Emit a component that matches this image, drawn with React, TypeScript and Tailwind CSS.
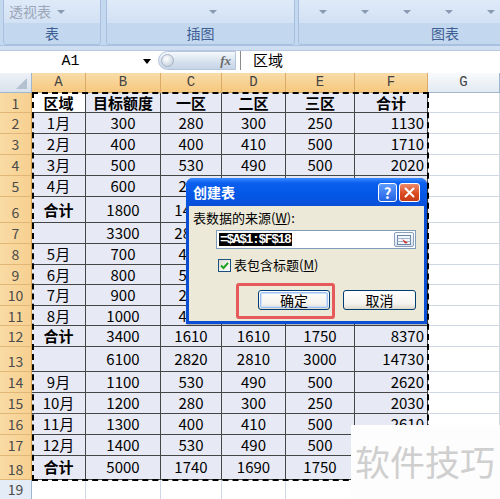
import React from 'react'

const COLS = ['A', 'B', 'C', 'D', 'E', 'F', 'G']
const COL_W = ['w-[54px]', 'w-[75px]', 'w-[61px]', 'w-[64px]', 'w-[69px]', 'w-[73px]', 'w-[72px]']

type Row = { n: number; h: string; tall?: boolean; bold?: boolean; cells: string[] }

const ROWS: Row[] = [
  { n: 1, h: 'h-[20px]', bold: true, cells: ['区域', '目标额度', '一区', '二区', '三区', '合计'] },
  { n: 2, h: 'h-[21px]', cells: ['1月', '300', '280', '300', '250', '1130'] },
  { n: 3, h: 'h-[21px]', cells: ['2月', '400', '400', '410', '500', '1710'] },
  { n: 4, h: 'h-[21px]', cells: ['3月', '500', '530', '490', '500', '2020'] },
  { n: 5, h: 'h-[21px]', cells: ['4月', '600', '280', '300', '250', '1710'] },
  { n: 6, h: 'h-[26px]', tall: true, cells: ['合计', '1800', '1490', '1500', '1500', '6570'] },
  { n: 7, h: 'h-[21px]', cells: ['', '3300', '2820', '2810', '3000', '14730'] },
  { n: 8, h: 'h-[21px]', cells: ['5月', '700', '400', '410', '500', '2010'] },
  { n: 9, h: 'h-[20px]', cells: ['6月', '800', '530', '490', '500', '2320'] },
  { n: 10, h: 'h-[21px]', cells: ['7月', '900', '280', '300', '250', '1730'] },
  { n: 11, h: 'h-[20px]', cells: ['8月', '1000', '400', '410', '500', '2310'] },
  { n: 12, h: 'h-[21px]', cells: ['合计', '3400', '1610', '1610', '1750', '8370'] },
  { n: 13, h: 'h-[25px]', tall: true, cells: ['', '6100', '2820', '2810', '3000', '14730'] },
  { n: 14, h: 'h-[21px]', cells: ['9月', '1100', '530', '490', '500', '2620'] },
  { n: 15, h: 'h-[21px]', cells: ['10月', '1200', '280', '300', '250', '2030'] },
  { n: 16, h: 'h-[21px]', cells: ['11月', '1300', '400', '410', '500', '2610'] },
  { n: 17, h: 'h-[21px]', cells: ['12月', '1400', '530', '490', '500', '2920'] },
  { n: 18, h: 'h-[24px]', tall: true, cells: ['合计', '5000', '1740', '1690', '1750', '10180'] },
]

function Arrow() {
  return <span className="inline-block w-0 h-0 border-x-[4px] border-x-transparent border-t-[4px] border-t-[#8a9bb3]" />
}

function Ribbon() {
  return (
    <div className="h-[46px] flex pl-[3px] bg-[#c4d8ef] border-b border-[#a9c2df] overflow-hidden">
      <div className="w-[98px] shrink-0 flex flex-col border border-t-0 border-[#a7c0df] rounded-b-[4px] overflow-hidden">
        <div className="h-[27px] bg-[linear-gradient(#dfeaf8,#d2e1f4)] flex items-center pl-[5px] gap-[6px] text-[14px] text-[#9ba7b8]">
          透视表 <Arrow />
        </div>
        <div className="flex-1 bg-[#c3d8ef] flex items-center justify-center text-[14px] text-[#3e5f94]">表</div>
      </div>
      <div className="w-[189px] ml-[5px] shrink-0 flex flex-col border border-t-0 border-[#a7c0df] rounded-b-[4px] overflow-hidden">
        <div className="h-[27px] bg-[linear-gradient(#dfeaf8,#d2e1f4)] flex items-center pl-[102px]">
          <Arrow />
        </div>
        <div className="flex-1 bg-[#c3d8ef] flex items-center justify-center text-[14px] text-[#3e5f94]">插图</div>
      </div>
      <div className="w-[294px] ml-[3px] shrink-0 flex flex-col border border-t-0 border-[#a7c0df] rounded-b-[4px] overflow-hidden">
        <div className="h-[27px] bg-[linear-gradient(#dfeaf8,#d2e1f4)] flex items-center pl-[20px] gap-[34px]">
          <Arrow />
          <Arrow />
          <Arrow />
          <Arrow />
          <Arrow />
        </div>
        <div className="flex-1 bg-[#c3d8ef] flex items-center justify-center text-[14px] text-[#3e5f94]">图表</div>
      </div>
    </div>
  )
}

function FormulaBar() {
  return (
    <div className="h-[24px] pt-[4px] bg-[#cfdef0]">
      <div className="h-[20px] flex bg-white border-t border-[#b6c9e0]">
        <div className="w-[155px] flex items-center relative">
          <span className="flex-1 text-center pr-[14px] pt-[3px] text-[15px] font-['Liberation_Mono',monospace] text-black">A1</span>
          <span className="absolute right-[4px] top-[8px] w-0 h-0 border-x-[4px] border-x-transparent border-t-[5px] border-t-black" />
        </div>
        <div className="w-[78px] ml-[3px] rounded-l-full bg-[linear-gradient(#f6f9fc,#d7e2ef_55%,#c6d4e6)] border border-[#b5c6dc] flex items-center justify-between pl-[2px] pr-[4px]">
          <span className="w-[13px] h-[13px] rounded-full bg-[radial-gradient(circle_at_40%_35%,#ffffff,#b9c6d6)] border border-[#a6b4c6]" />
          <span className="text-[13px] italic font-bold font-['Liberation_Serif',serif] text-[#6b6b6b]">fx</span>
        </div>
        <div className="flex-1 ml-[4px] border-l border-[#8b8b8b] pl-[12px] flex items-center text-[15px] text-black">区域</div>
      </div>
    </div>
  )
}

function Sheet() {
  return (
    <div className="flex flex-col bg-white">
      <div className="h-[20px] flex mt-[3px]">
        <div className="w-[32px] relative bg-[linear-gradient(#eef2f7,#d9e2ec)] border-r border-b border-[#9eb6ce]">
          <span className="absolute right-[4px] bottom-[3px] w-0 h-0 border-l-[11px] border-l-transparent border-b-[11px] border-b-[#b3c1d1]" />
        </div>
        {COLS.map((c, i) => (
          <div
            key={c}
            className={`${COL_W[i]} flex items-center justify-center text-[14px] font-['Liberation_Mono',monospace] text-[#444] border-r border-b ${
              i < 6
                ? 'bg-[linear-gradient(#f9dcaa,#f6c87d)] border-[#d9ab66]'
                : 'bg-[linear-gradient(#f8fafc,#e3eaf3)] border-[#9eb6ce]'
            }`}
          >
            {c}
          </div>
        ))}
      </div>
      {ROWS.map((r) => (
        <div key={r.n} className={`${r.h} flex`}>
          <div
            className={`w-[32px] flex justify-center text-[14px] text-[#4b4b4b] bg-[linear-gradient(to_right,#f9dba4,#f7d090)] border-r border-r-[#d8a24f] border-b border-b-[#e1b777] leading-[20px] ${
              r.tall ? 'items-end' : 'items-center'
            }`}
          >
            {r.n}
          </div>
          {r.cells.map((v, i) => (
            <div
              key={i}
              className={`${COL_W[i]} flex leading-[20px] border-r border-b border-[#454545] text-black text-[15px] ${
                r.n === 1 && i === 0 ? 'bg-white' : 'bg-[#e7e9f4]'
              } ${i === 5 && !r.bold ? 'justify-end pr-[3px]' : 'justify-center'} ${
                r.tall ? 'items-end pb-[2px]' : 'items-center'
              } ${r.bold || (i === 0 && v === '合计') ? 'font-bold' : ''}`}
            >
              {v}
            </div>
          ))}
          <div className="w-[72px] border-r border-b border-[#d0d7e5]" />
        </div>
      ))}
      <div className="h-[20px] flex">
        <div className="w-[32px] flex items-center justify-center text-[14px] text-[#4b4b4b] bg-[#e4ecf7] border-r border-b border-[#9eb6ce]">
          19
        </div>
        {COL_W.map((w, i) => (
          <div key={i} className={`${w} border-r border-b border-[#d0d7e5]`} />
        ))}
      </div>
    </div>
  )
}

function XpButton({ label, focus }: { label: string; focus?: boolean }) {
  return (
    <div className="h-[20px] rounded-[3px] border border-[#003c74] bg-[linear-gradient(#ffffff,#f4f3ee_70%,#dcd9cc)] p-[1px]">
      <div
        className={`h-full rounded-[2px] flex items-center justify-center text-[14px] text-black ${
          focus ? 'border border-[#9fc0f5] shadow-[inset_0_0_0_1px_#cfe0fb]' : ''
        }`}
      >
        {label}
      </div>
    </div>
  )
}

function Dialog() {
  return (
    <div className="absolute left-[186px] top-[178px] w-[241px] h-[146px] rounded-t-[7px] bg-[#0a4ed6] flex flex-col px-[3px] pb-[3px] shadow-[1px_1px_2px_rgba(0,0,0,0.3)]">
      <div className="h-[28px] -mx-[3px] px-[7px] rounded-t-[7px] bg-[linear-gradient(#3a8bff,#0a5fef_18%,#0457e6_60%,#0a50d9)] flex items-center">
        <span className="flex-1 text-[14px] font-bold text-white">创建表</span>
        <span className="w-[19px] h-[19px] rounded-[3px] border border-white bg-[linear-gradient(#5e9bff,#2363e3)] flex items-center justify-center text-[15px] font-bold text-white leading-none">
          ?
        </span>
        <span className="w-[21px] h-[19px] ml-[2px] rounded-[3px] border border-white bg-[linear-gradient(#ee8a6a,#d9481f_60%,#c53c17)] flex items-center justify-center">
          <svg width="11" height="11" viewBox="0 0 11 11">
            <path d="M1.5 1.5 L9.5 9.5 M9.5 1.5 L1.5 9.5" stroke="white" strokeWidth="2" strokeLinecap="round" />
          </svg>
        </span>
      </div>
      <div className="flex-1 bg-[#ece9d8] pt-[3px] pl-[4px] pr-[8px] flex flex-col">
        <div className="h-[18px] text-[13px] text-black flex items-center">
          表数据的来源(<span className="underline">W</span>):
        </div>
        <div className="ml-[23px] mt-[3px] h-[19px] bg-white border border-[#7f9db9] flex items-center pl-[2px] pr-[1px]">
          <span className="bg-black text-white text-[13px] leading-[13px] font-bold font-['Liberation_Mono',monospace] tracking-[-1.4px] pl-[1px] pr-[2px]">
            =$A$1:$F$18
          </span>
          <span className="ml-auto w-[20px] h-[15px] rounded-[2px] border border-[#8aa0bd] bg-[linear-gradient(#fafcff,#d9e3ef)] flex items-center justify-center">
            <svg width="14" height="10" viewBox="0 0 14 10">
              <rect x="0.5" y="0.5" width="13" height="9" fill="#f3f6fa" stroke="#6b85a8" />
              <path d="M0.5 3.5 H13.5 M0.5 6.5 H13.5" stroke="#9fb3cc" />
              <path d="M5 4 L11 8 L8 8.5 Z" fill="#d7261e" />
            </svg>
          </span>
        </div>
        <div className="ml-[25px] mt-[8px] h-[16px] flex items-center gap-[3px] text-[13px] text-black">
          <span className="w-[13px] h-[13px] border border-[#1c5180] bg-[linear-gradient(135deg,#dcdcd4,#ffffff)] flex items-center justify-center">
            <svg width="9" height="9" viewBox="0 0 9 9">
              <path d="M1 4.5 L3.5 7 L8 1.8" fill="none" stroke="#21a121" strokeWidth="2" />
            </svg>
          </span>
          <span>
            表包含标题(<span className="underline">M</span>)
          </span>
        </div>
        <div className="mt-[17px] flex justify-end gap-[13px]">
          <div className="w-[72px]">
            <XpButton label="确定" focus />
          </div>
          <div className="w-[73px]">
            <XpButton label="取消" />
          </div>
        </div>
      </div>
    </div>
  )
}

export default function App() {
  return (
    <div className="relative w-[500px] h-[499px] overflow-hidden bg-[#cfdef0] font-['Noto_Sans_CJK_SC',sans-serif]">
      <Ribbon />
      <FormulaBar />
      <Sheet />
      {/* copy marquee around A1:F18 */}
      <div className="absolute left-[32px] top-[92px] w-[397px] h-[389px] border-2 border-dashed border-black pointer-events-none" />
      <Dialog />
      {/* highlight around OK */}
      <div className="absolute left-[236px] top-[283px] w-[99px] h-[36px] rounded-[3px] border-[3px] border-[#e65a5c]" />
      {/* watermark */}
      <div className="absolute left-[351px] top-[425px] w-[149px] h-[74px] bg-[#fdfdfd] pl-[4px] pt-[16px] text-[35px] leading-[40px] text-[#cfcfcf]">
        软件技巧
      </div>
    </div>
  )
}
